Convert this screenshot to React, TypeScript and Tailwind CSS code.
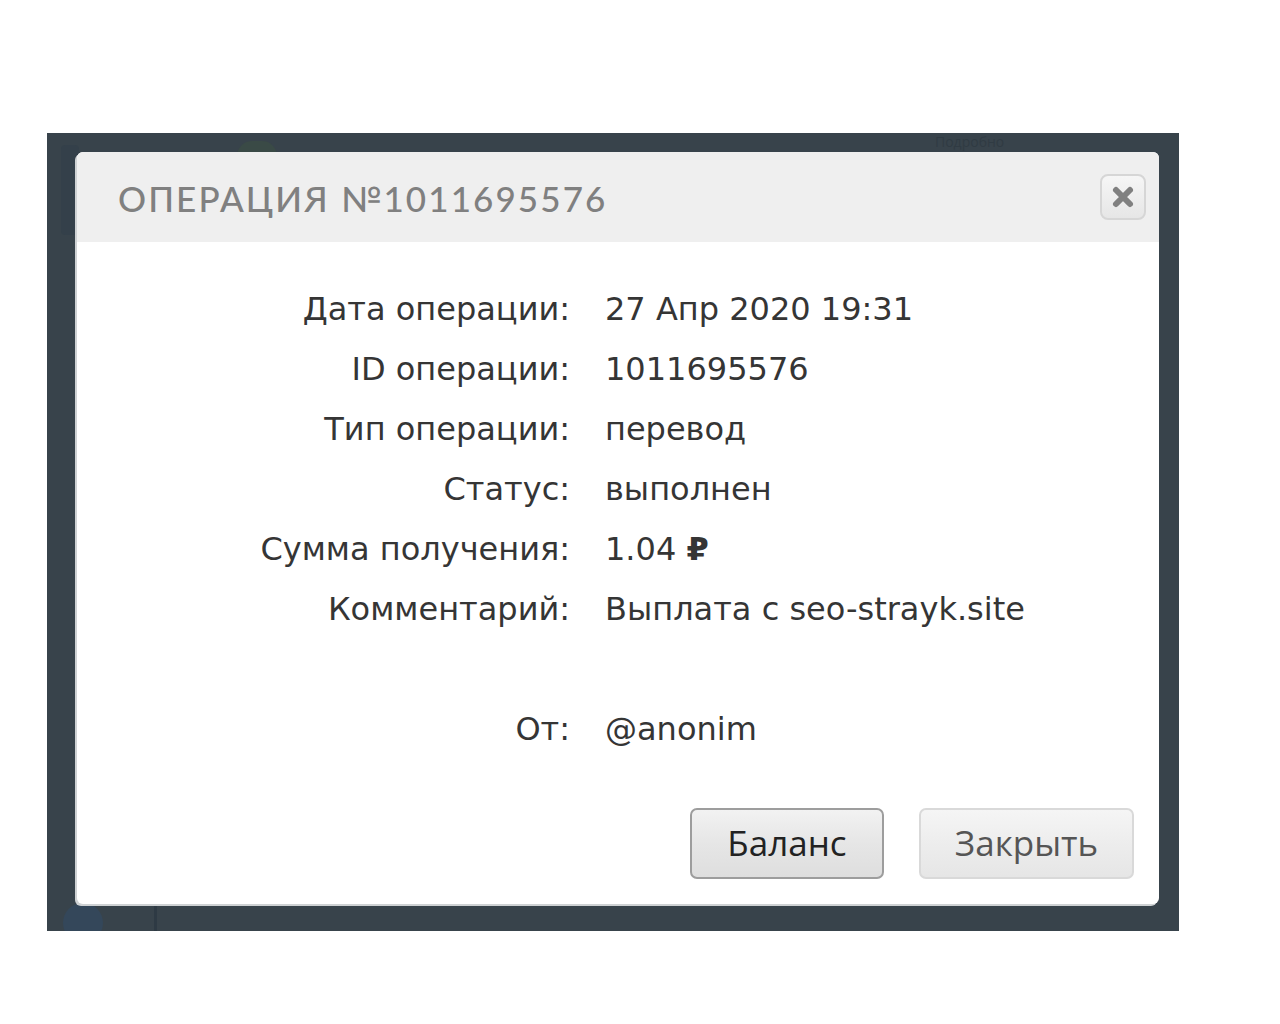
import React from 'react';

const rows: { label: string; value: React.ReactNode }[] = [
  { label: 'Дата операции:', value: '27 Апр 2020 19:31' },
  { label: 'ID операции:', value: '1011695576' },
  { label: 'Тип операции:', value: 'перевод' },
  { label: 'Статус:', value: 'выполнен' },
  { label: 'Сумма получения:', value: <>1.04 <span className="font-bold">₽</span></> },
  { label: 'Комментарий:', value: 'Выплата с seo-strayk.site' },
  { label: '', value: '' },
  { label: 'От:', value: '@anonim' },
];

const bodyFont = { fontFamily: '"DejaVu Sans", "Open Sans", sans-serif' };
const btnFont = { fontFamily: '"Open Sans", "Noto Sans", sans-serif' };

export default function App() {
  return (
    <div className="min-h-[1024px] w-[1280px] bg-white">
      <div className="h-[133px]" />
      {/* dimmed page behind the modal */}
      <div className="relative ml-[47px] h-[798px] w-[1132px] overflow-hidden bg-[#38434b] pl-[30px] pt-[19px]">
        <div className="absolute left-[14px] top-[12px] h-[90px] w-[18px] rounded-sm bg-[#34404a]" />
        <div className="absolute left-[190px] top-[8px] h-[30px] w-[40px] rounded-full bg-[#3a4a46]" />
        <div className="absolute left-[888px] top-[2px] text-[14px] leading-none text-[#303b43]" style={btnFont}>
          Подробно
        </div>
        <div className="absolute bottom-[-12px] left-[16px] h-[40px] w-[40px] rounded-full bg-[#34475a]" />
        <div className="absolute bottom-0 left-[107px] h-[26px] w-[3px] bg-[#2e3a44]" />

        {/* modal */}
        <div className="relative flex h-[752px] w-[1082px] flex-col overflow-hidden rounded-[6px] bg-white shadow-[-2px_2px_0_#cfd2d4]">
          <div className="flex h-[90px] shrink-0 items-center justify-between bg-[#efefef] pl-[41px] pr-[13px]">
            <h1
              className="pt-[2px] text-[35px] font-medium tracking-[0.06em] text-[#808080]"
              style={{ fontFamily: '"Lato", "Liberation Sans", sans-serif' }}
            >
              ОПЕРАЦИЯ №1011695576
            </h1>
            <button className="flex h-[46px] w-[46px] items-center justify-center rounded-[8px] border-2 border-[#d6d6d6] bg-gradient-to-b from-[#f6f6f6] to-[#e6e6e6]">
              <svg width="24" height="24" viewBox="0 0 24 24" className="blur-[0.6px]">
                <path d="M5 5 L19 19 M19 5 L5 19" stroke="#808080" strokeWidth="6" strokeLinecap="round" />
              </svg>
            </button>
          </div>

          <div className="flex flex-1 flex-col pt-[37px]" style={bodyFont}>
            {rows.map((r, i) => (
              <div key={i} className="flex h-[60px] items-center text-[32px] text-[#353535]">
                <div className="w-[493px] shrink-0 text-right">{r.label}</div>
                <div className="pl-[35px]">{r.value}</div>
              </div>
            ))}

            <div className="mt-[49px] flex justify-end gap-[35px] pr-[25px]" style={btnFont}>
              <button className="h-[71px] w-[194px] rounded-[7px] border-2 border-[#9d9d9d] bg-gradient-to-b from-[#f2f2f2] via-[#e6e6e6] to-[#dedede] text-[35px] text-[#222]">
                Баланс
              </button>
              <button className="h-[71px] w-[215px] rounded-[7px] border-2 border-[#d9d9d9] bg-gradient-to-b from-[#f5f5f5] via-[#ededed] to-[#e6e6e6] text-[35px] text-[#555]">
                Закрыть
              </button>
            </div>
          </div>
        </div>
      </div>
    </div>
  );
}
